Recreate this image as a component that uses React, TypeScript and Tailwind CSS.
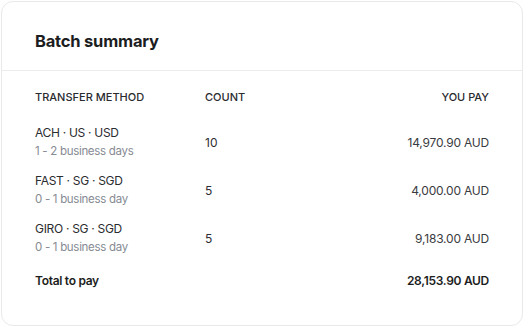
import React from "react";

const rows = [
  { method: "ACH · US · USD", eta: "1 - 2 business days", count: "10", pay: "14,970.90 AUD" },
  { method: "FAST · SG · SGD", eta: "0 - 1 business day", count: "5", pay: "4,000.00 AUD" },
  { method: "GIRO · SG · SGD", eta: "0 - 1 business day", count: "5", pay: "9,183.00 AUD" },
];

export default function App() {
  return (
    <div className="w-[525px] h-[327px] bg-white p-px" style={{ fontFamily: "Inter, 'Noto Sans', sans-serif" }}>
      <div className="w-[522px] h-[325px] rounded-xl border border-[#e8e9eb] bg-white flex flex-col">
        <div className="px-[33px] pt-[27px] pb-[17px] border-b border-[#ececee]">
          <h1 className="text-[16.5px] leading-[24px] font-bold text-[#1c1d21] tracking-[-0.2px]">Batch summary</h1>
        </div>
        <div className="px-[33px] pt-[18px] flex flex-col text-[#2b2c30]">
          <div className="grid grid-cols-[170px_1fr_auto] text-[11px] leading-[16px] font-medium uppercase text-[#2a2b2f] mb-[18px]">
            <div>Transfer method</div>
            <div>Count</div>
            <div className="text-right">You pay</div>
          </div>
          <div className="flex flex-col gap-[10px]">
            {rows.map((r) => (
              <div key={r.method} className="grid grid-cols-[170px_1fr_auto] items-center text-[12px] h-[38px]">
                <div className="flex flex-col leading-[19px]">
                  <span className="text-[#2b2c30] tracking-[-0.3px]">{r.method}</span>
                  <span className="text-[#868a93] text-[11.5px] tracking-[-0.3px]">{r.eta}</span>
                </div>
                <div className="leading-[19px]">{r.count}</div>
                <div className="text-right leading-[19px] text-[#3a3b40] tracking-[-0.2px]">{r.pay}</div>
              </div>
            ))}
          </div>
          <div className="grid grid-cols-[170px_1fr_auto] text-[12px] leading-[16px] font-semibold text-[#1c1d21] mt-[16px] tracking-[-0.3px]">
            <div>Total to pay</div>
            <div></div>
            <div className="text-right">28,153.90 AUD</div>
          </div>
        </div>
      </div>
    </div>
  );
}
